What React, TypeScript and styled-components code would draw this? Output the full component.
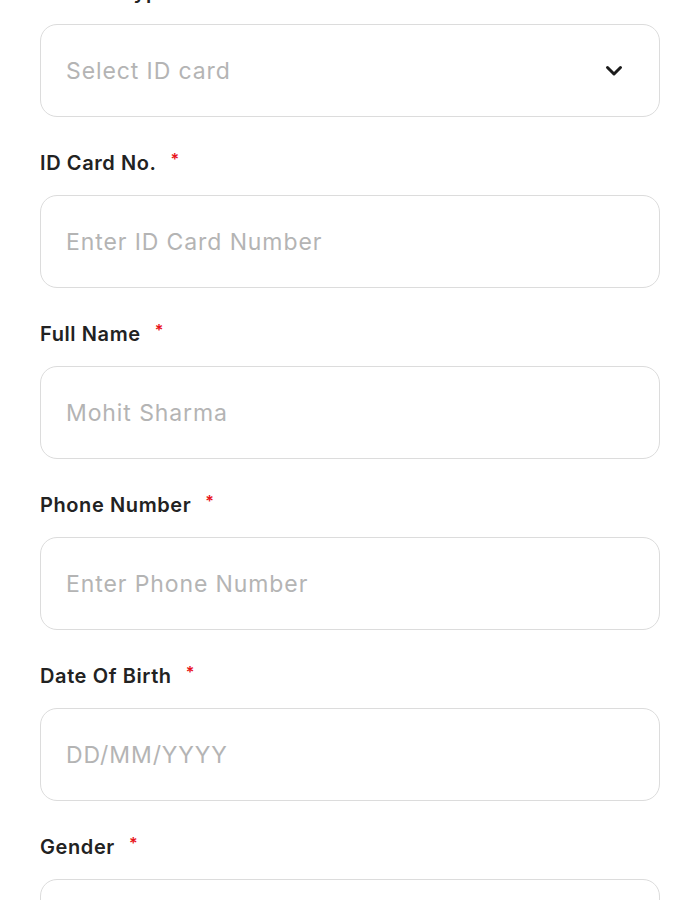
import styled, { createGlobalStyle } from 'styled-components';

const GlobalStyle = createGlobalStyle`
    body {
        margin: 0;
        background: #ffffff;
        font-family: Inter, "Noto Sans", sans-serif;
    }
`;

const fields = [
    { label: 'ID Card Type', placeholder: 'Select ID card', select: true },
    { label: 'ID Card No.', placeholder: 'Enter ID Card Number' },
    { label: 'Full Name', placeholder: 'Mohit Sharma' },
    { label: 'Phone Number', placeholder: 'Enter Phone Number' },
    { label: 'Date Of Birth', placeholder: 'DD/MM/YYYY' },
    { label: 'Gender', placeholder: 'Select gender', select: true },
];

function ChevronIcon() {
    return (
        <svg width="18" height="12" viewBox="0 0 18 12" fill="none">
            <polyline points="2.5,2.5 9,9 15.5,2.5" stroke="#1c1c1c" strokeWidth="3" strokeLinecap="round" strokeLinejoin="round" />
        </svg>
    );
}

function App() {
    return (
        <>
            <GlobalStyle />
            <Form>
                {fields.map((f) => (
                    <Field key={f.label}>
                        <Label>
                            {f.label}
                            <Required>*</Required>
                        </Label>
                        <InputBox>
                            <Input placeholder={f.placeholder} readOnly={f.select} />
                            {f.select && <ChevronIcon />}
                        </InputBox>
                    </Field>
                ))}
            </Form>
        </>
    );
}

const Form = styled.form`
    display: flex;
    flex-direction: column;
    gap: 34px;
    padding: 0 40px;
    margin-top: -20px;
`;

const Field = styled.div`
    display: flex;
    flex-direction: column;
    gap: 20px;
`;

const Label = styled.label`
    display: flex;
    align-items: flex-start;
    height: 24px;
    line-height: 24px;
    font-size: 20px;
    font-weight: 600;
    color: #222222;
    letter-spacing: 0.6px;
`;

const Required = styled.span`
    margin-left: 14px;
    font-size: 16px;
    line-height: 16px;
    color: #e8141b;
`;

const InputBox = styled.div`
    box-sizing: border-box;
    display: flex;
    align-items: center;
    height: 93px;
    padding: 0 36px 0 25px;
    border: 1.5px solid #dcdcdc;
    border-radius: 17px;
    background: #ffffff;
`;

const Input = styled.input`
    flex: 1;
    border: none;
    outline: none;
    background: transparent;
    font-family: Inter, "Noto Sans", sans-serif;
    font-size: 23px;
    letter-spacing: 0.9px;
    color: #222222;
    padding: 0;

    &::placeholder {
        color: #b4b4b4;
    }
`;

export default App;
